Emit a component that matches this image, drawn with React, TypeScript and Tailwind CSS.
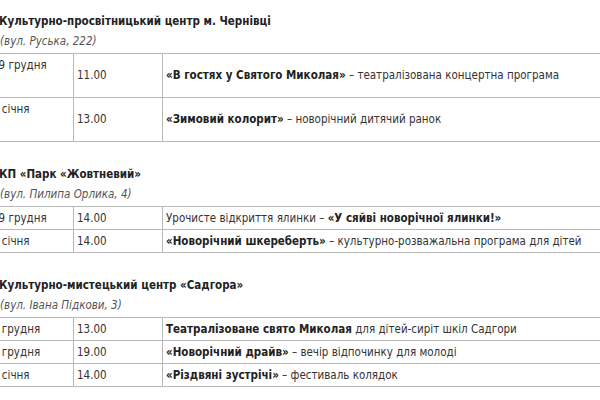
import React from 'react';

type Row = { date: string; time: string; pre?: string; bold: string; rest?: string };
type Section = { title: string; addr: string; tall?: boolean; rows: Row[] };

const sections: Section[] = [
  {
    title: 'Культурно-просвітницький центр м. Чернівці',
    addr: '(вул. Руська, 222)',
    tall: true,
    rows: [
      { date: '19 грудня', time: '11.00', bold: '«В гостях у Святого Миколая»', rest: ' – театралізована концертна програма' },
      { date: '3 січня', time: '13.00', bold: '«Зимовий колорит»', rest: ' – новорічний дитячий ранок' },
    ],
  },
  {
    title: 'КП «Парк «Жовтневий»',
    addr: '(вул. Пилипа Орлика, 4)',
    rows: [
      { date: '19 грудня', time: '14.00', pre: 'Урочисте відкриття ялинки – ', bold: '«У сяйві новорічної ялинки!»' },
      { date: '3 січня', time: '14.00', bold: '«Новорічний шкереберть»', rest: ' – культурно-розважальна програма для дітей' },
    ],
  },
  {
    title: 'Культурно-мистецький центр «Садгора»',
    addr: '(вул. Івана Підкови, 3)',
    rows: [
      { date: '8 грудня', time: '13.00', bold: 'Театралізоване свято Миколая', rest: ' для дітей-сиріт шкіл Садгори' },
      { date: '9 грудня', time: '19.00', bold: '«Новорічний драйв»', rest: ' – вечір відпочинку для молоді' },
      { date: '8 січня', time: '14.00', bold: '«Різдвяні зустрічі»', rest: ' – фестиваль колядок' },
    ],
  },
];

export default function App() {
  return (
    <div
      className="w-[600px] h-[400px] overflow-hidden bg-white text-[#333] text-[11.5px] leading-[17px]"
      style={{ fontFamily: '"DejaVu Sans Condensed", "DejaVu Sans", sans-serif' }}
    >
      <div className="-ml-[12px] w-[760px] pt-[11px]">
        {sections.map((s, i) => (
          <div key={i} className={i > 0 ? 'mt-[22px]' : ''}>
            <h2 className="ml-[11px] font-bold text-[#222] leading-[20px]">{s.title}</h2>
            <p className="ml-[12px] italic text-[#555] leading-[20px]">{s.addr}</p>
            <div className="mt-[2px] border-t border-[#b8b8b8]">
              {s.rows.map((r, j) => (
                <div
                  key={j}
                  className={`grid grid-cols-[86px_89px_1fr] border-b border-[#b8b8b8] ${s.tall ? 'h-[44px]' : 'h-[23px]'}`}
                >
                  <div className={`flex border-r border-[#b8b8b8] pl-[4px] ${s.tall ? 'items-start pt-[3px]' : 'items-center'}`}>
                    {r.date}
                  </div>
                  <div className="flex items-center border-r border-[#b8b8b8] pl-[3px]">{r.time}</div>
                  <div className="flex items-center pl-[3px] whitespace-pre">
                    {r.pre}
                    <b className="text-[#222]">{r.bold}</b>
                    {r.rest}
                  </div>
                </div>
              ))}
            </div>
          </div>
        ))}
      </div>
    </div>
  );
}
